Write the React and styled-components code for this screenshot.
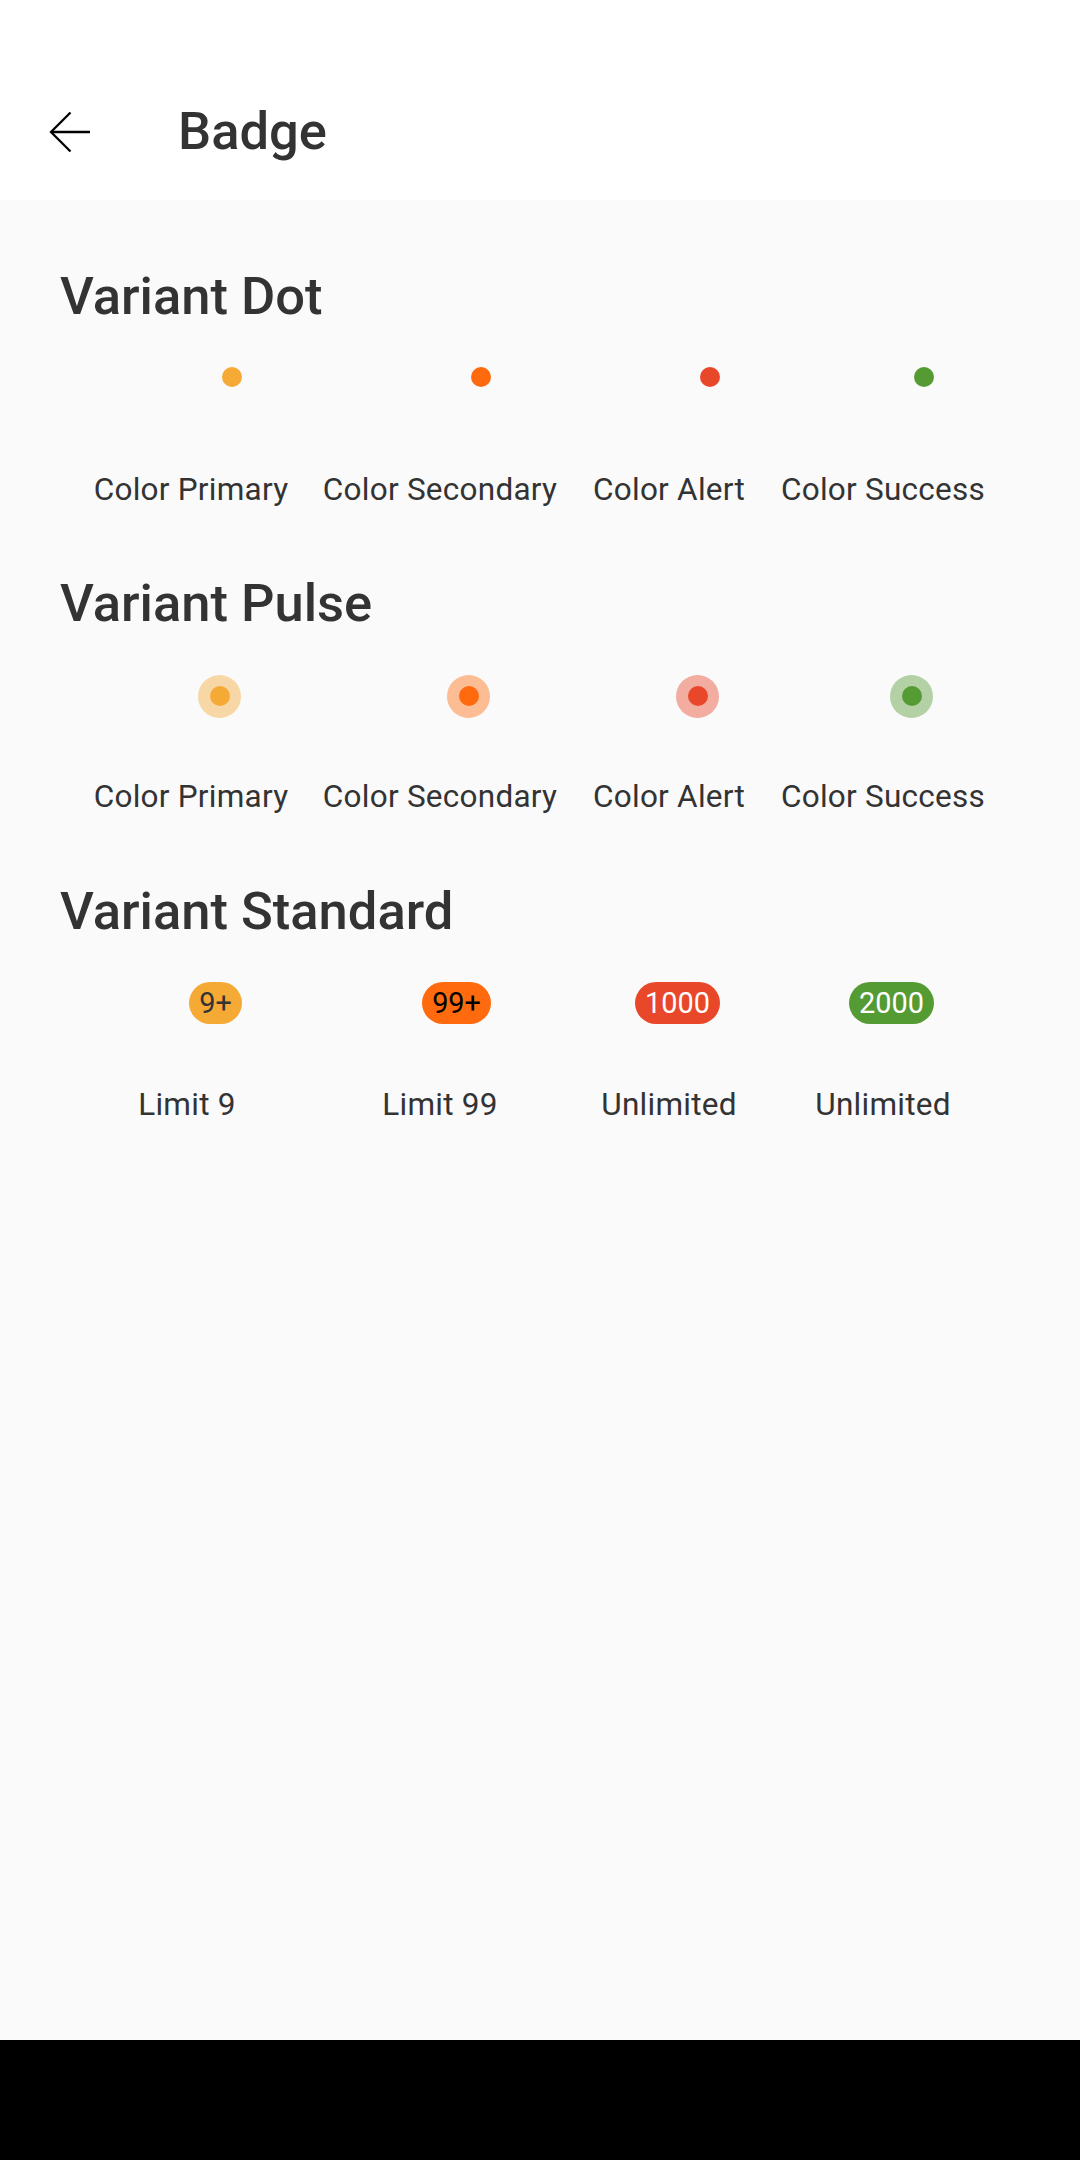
import React from "react";
import styled, { createGlobalStyle } from "styled-components";

const Global = createGlobalStyle`
  html, body { margin: 0; padding: 0; }
  body {
    font-family: Roboto, "Noto Sans", "Liberation Sans", sans-serif;
    background: #fafafa;
    -webkit-font-smoothing: antialiased;
  }
`;

const COLORS = {
  primary: { main: "#f4aa35", ring: "rgba(244,170,53,0.43)", text: "#333333" },
  secondary: { main: "#ff6a0e", ring: "rgba(255,106,14,0.43)", text: "#000000" },
  alert: { main: "#e84729", ring: "rgba(232,71,41,0.43)", text: "#ffffff" },
  success: { main: "#559b33", ring: "rgba(85,155,51,0.43)", text: "#ffffff" },
};

const Screen = styled.div`
  width: 1080px;
  min-height: 2160px;
  display: flex;
  flex-direction: column;
  background: #fafafa;
`;

const AppBar = styled.header`
  height: 200px;
  box-sizing: border-box;
  padding-top: 63px;
  background: #ffffff;
  display: flex;
  align-items: center;
`;

const BackButton = styled.button`
  width: 42px;
  height: 42px;
  margin-left: 49px;
  padding: 0;
  border: none;
  background: transparent;
  display: flex;
  align-items: center;
  justify-content: center;
  cursor: pointer;
`;

const Title = styled.h1`
  margin: 0 0 0 87px;
  font-size: 52.5px;
  line-height: 63px;
  font-weight: 500;
  color: #333333;
`;

const Content = styled.main`
  flex: 1;
  padding-top: 64.5px;
  display: flex;
  flex-direction: column;
`;

const Section = styled.section`
  display: flex;
  flex-direction: column;
  margin-bottom: 63.8px;
`;

const Heading = styled.h2`
  margin: 0 0 0 60px;
  font-size: 52.5px;
  line-height: 63px;
  font-weight: 500;
  color: #333333;
`;

const Row = styled.div`
  margin-top: 39.5px;
  display: grid;
  grid-template-columns: 228px 270px 188px 240px;
  justify-content: center;
`;

const Item = styled.div`
  display: flex;
  flex-direction: column;
  align-items: center;
`;

const Slot = styled.div`
  width: 102px;
  height: 43px;
  display: flex;
  justify-content: flex-end;
  align-items: flex-start;
`;

const Label = styled.span`
  margin-top: 60.6px;
  margin-right: ${(p) => p.$nudge || 0}px;
  font-size: 31.5px;
  line-height: 37.8px;
  letter-spacing: 0.25px;
  color: #333333;
  white-space: nowrap;
`;

const Dot = styled.span`
  width: 20px;
  height: 20px;
  border-radius: 50%;
  background: ${(p) => p.$color.main};
`;

const Pulse = styled.span`
  width: 43px;
  height: 43px;
  margin-right: 1px;
  border-radius: 50%;
  background: ${(p) => p.$color.ring};
  display: flex;
  align-items: center;
  justify-content: center;

  &::after {
    content: "";
    width: 20px;
    height: 20px;
    border-radius: 50%;
    background: ${(p) => p.$color.main};
  }
`;

const Pill = styled.span`
  height: 42px;
  padding: 0 10px;
  border-radius: 21px;
  background: ${(p) => p.$color.main};
  color: ${(p) => p.$color.text};
  font-size: 28.9px;
  line-height: 42px;
  white-space: nowrap;
`;

const NavBar = styled.div`
  height: 120px;
  background: #000000;
  flex-shrink: 0;
`;

const ArrowIcon = () => (
  <svg width="42" height="42" viewBox="0 0 42 42" fill="none">
    <path d="M41 21H2" stroke="#000" strokeWidth="2.3" />
    <path d="M21.5 1.5L2 21l19.5 19.5" stroke="#000" strokeWidth="2.3" />
  </svg>
);

const colorItems = [
  { key: "primary", label: "Color Primary" },
  { key: "secondary", label: "Color Secondary" },
  { key: "alert", label: "Color Alert" },
  { key: "success", label: "Color Success" },
];

const standardItems = [
  { key: "primary", value: 10, max: 9, label: "Limit 9", nudge: 8 },
  { key: "secondary", value: 100, max: 99, label: "Limit 99" },
  { key: "alert", value: 1000, label: "Unlimited" },
  { key: "success", value: 2000, label: "Unlimited" },
];

export default function App() {
  return (
    <>
      <Global />
      <Screen>
        <AppBar>
          <BackButton aria-label="Back">
            <ArrowIcon />
          </BackButton>
          <Title>Badge</Title>
        </AppBar>
        <Content>
          <Section>
            <Heading>Variant Dot</Heading>
            <Row>
              {colorItems.map((it) => (
                <Item key={it.key}>
                  <Slot>
                    <Dot $color={COLORS[it.key]} />
                  </Slot>
                  <Label>{it.label}</Label>
                </Item>
              ))}
            </Row>
          </Section>
          <Section>
            <Heading>Variant Pulse</Heading>
            <Row>
              {colorItems.map((it) => (
                <Item key={it.key}>
                  <Slot>
                    <Pulse $color={COLORS[it.key]} />
                  </Slot>
                  <Label>{it.label}</Label>
                </Item>
              ))}
            </Row>
          </Section>
          <Section>
            <Heading>Variant Standard</Heading>
            <Row>
              {standardItems.map((it, i) => (
                <Item key={i}>
                  <Slot>
                    <Pill $color={COLORS[it.key]}>
                      {it.max && it.value > it.max ? `${it.max}+` : it.value}
                    </Pill>
                  </Slot>
                  <Label $nudge={it.nudge}>{it.label}</Label>
                </Item>
              ))}
            </Row>
          </Section>
        </Content>
        <NavBar />
      </Screen>
    </>
  );
}
